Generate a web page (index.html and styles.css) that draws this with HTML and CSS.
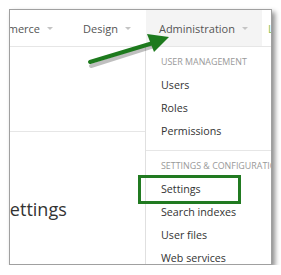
FILE: index.html
```html
<!DOCTYPE html>
<html>
<head>
<meta charset="utf-8">
<link rel="stylesheet" href="styles.css">
</head>
<body>
<div class="frame">
  <nav class="nav">
    <div class="nav-item first">Commerce <span class="caret"></span></div>
    <div class="nav-item">Design <span class="caret"></span></div>
    <div class="nav-item active">Administration <span class="caret"></span></div>
    <div class="nav-item green">Lo</div>
  </nav>
  <main class="page">
    <div class="toolbar"></div>
    <h1 class="title">Settings</h1>
  </main>
  <div class="menu">
    <div class="menu-head">USER MANAGEMENT</div>
    <div class="menu-item">Users</div>
    <div class="menu-item">Roles</div>
    <div class="menu-item">Permissions</div>
    <div class="menu-divider"></div>
    <div class="menu-head">SETTINGS &amp; CONFIGURATION</div>
    <div class="menu-item">Settings</div>
    <div class="menu-item">Search indexes</div>
    <div class="menu-item">User files</div>
    <div class="menu-item">Web services</div>
  </div>
  <div class="highlight"></div>
  <svg class="arrow" width="100" height="40" viewBox="0 0 100 40">
    <line x1="3" y1="30" x2="66" y2="10" stroke="rgba(0,0,0,0.25)" stroke-width="4" stroke-linecap="round" transform="translate(1,2)"/>
    <line x1="3" y1="28" x2="66" y2="9" stroke="#1d7a1d" stroke-width="4" stroke-linecap="round"/>
    <polygon points="82,3 60,0 67,18" fill="#1d7a1d"/>
  </svg>
</div>
</body>
</html>
```
FILE: styles.css
```css
html, body {
  margin: 0;
  padding: 0;
  background: #fff;
}
body {
  font-family: "Open Sans", "Liberation Sans", sans-serif;
}
.frame {
  position: relative;
  margin: 9px 0 0 9px;
  width: 261px;
  height: 254px;
  border: 1px solid #a0a0a0;
  box-shadow: 3px 3px 5px rgba(0,0,0,0.45);
  overflow: hidden;
  background: #fff;
}
.nav {
  display: flex;
  height: 36px;
  border-bottom: 1px solid #e6e6e6;
  white-space: nowrap;
}
.nav-item {
  display: flex;
  align-items: center;
  gap: 7px;
  font-size: 11px;
  color: #555;
  padding: 0 15px;
}
.nav-item.first {
  margin-left: -41px;
}
.nav-item.active {
  background: #f4f4f4;
  padding-left: 13px;
  padding-right: 14px;
}
.nav-item.green {
  color: #8cc152;
  padding-left: 6px;
}
.caret {
  width: 0;
  height: 0;
  border-left: 3px solid transparent;
  border-right: 3px solid transparent;
  border-top: 3px solid #c4c4c4;
  margin-top: 1px;
}
.page {
  display: flex;
  flex-direction: column;
}
.toolbar {
  height: 84px;
  border-bottom: 1px solid #e6e6e6;
}
.title {
  margin: 64px 0 0 -10px;
  font-size: 18px;
  font-weight: 400;
  color: #333;
  line-height: 26px;
}
.menu {
  position: absolute;
  left: 135px;
  top: 37px;
  width: 150px;
  height: 240px;
  background: #fff;
  border-left: 1px solid #e0e0e0;
  display: flex;
  flex-direction: column;
  white-space: nowrap;
}
.menu-head {
  font-size: 8.9px;
  color: #999;
  line-height: 16px;
  padding: 7px 0 4px 15px;
}
.menu-item {
  font-size: 10.7px;
  color: #333;
  line-height: 23px;
  padding-left: 15px;
}
.menu-divider {
  height: 1px;
  background: #e6e6e6;
  margin-top: 7px;
}
.highlight {
  position: absolute;
  left: 128px;
  top: 165px;
  width: 97px;
  height: 23px;
  border: 3px solid #217a21;
}
.arrow {
  position: absolute;
  left: 77px;
  top: 24px;
}
```
